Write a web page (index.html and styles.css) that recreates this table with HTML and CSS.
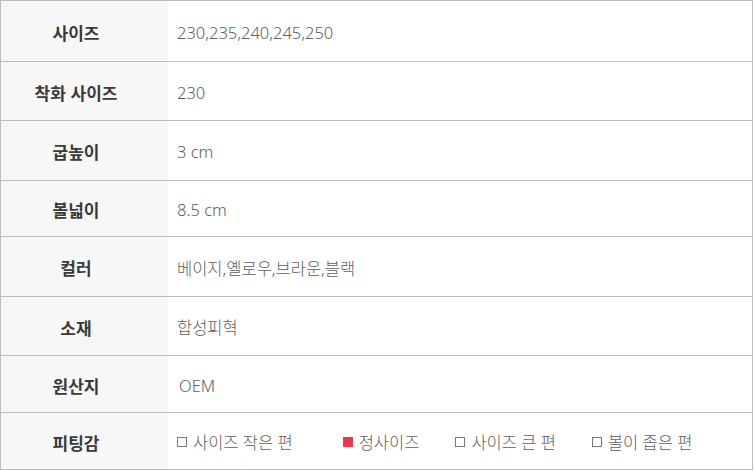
FILE: index.html
```html
<!DOCTYPE html>
<html lang="ko">
<head>
  <meta charset="UTF-8" />
  <meta name="viewport" content="width=device-width, initial-scale=1.0"/>
  <title>상품 정보</title>
  <link rel="stylesheet" href="styles.css">
</head>
<body>
  <table class="spec">
    <tr>
      <th>사이즈</th>
      <td>230,235,240,245,250</td>
    </tr>
    <tr>
      <th>착화 사이즈</th>
      <td>230</td>
    </tr>
    <tr>
      <th>굽높이</th>
      <td>3 cm</td>
    </tr>
    <tr>
      <th>볼넓이</th>
      <td>8.5 cm</td>
    </tr>
    <tr>
      <th>컬러</th>
      <td>베이지,옐로우,브라운,블랙</td>
    </tr>
    <tr>
      <th>소재</th>
      <td>합성피혁</td>
    </tr>
    <tr>
      <th>원산지</th>
      <td class="indent">OEM</td>
    </tr>
    <tr>
      <th>피팅감</th>
      <td>
        <div class="fit">
          <span class="opt first"><i class="box"></i>사이즈 작은 편</span>
          <span class="opt on"><i class="box"></i>정사이즈</span>
          <span class="opt"><i class="box"></i>사이즈 큰 편</span>
          <span class="opt"><i class="box"></i>볼이 좁은 편</span>
        </div>
      </td>
    </tr>
  </table>
</body>
</html>
```

FILE: styles.css
```css
body {
  margin: 0;
  background-color: #fff;
  font-family: "Noto Sans CJK KR", "Noto Sans", sans-serif;
}

.spec {
  width: 753px;
  border-collapse: collapse;
  border: 1px solid #bcbcbc;
}

.spec th,
.spec td {
  height: 57px;
  padding: 2px 0 0;
  border-bottom: 1px solid #bcbcbc;
  vertical-align: middle;
}

/* row heights follow the original image */
.spec tr:nth-child(1) > * { height: 58px; }
.spec tr:nth-child(2) > * { height: 56px; }
.spec tr:nth-child(3) > * { height: 57px; }
.spec tr:nth-child(4) > * { height: 53px; }
.spec tr:nth-child(5) > * { height: 57px; }
.spec tr:nth-child(6) > * { height: 56px; }
.spec tr:nth-child(7) > * { height: 54px; }
.spec tr:nth-child(8) > * { height: 54px; }

.spec th {
  width: 150px;
  padding-right: 17px;
  background-color: #f7f7f7;
  color: #3a3a3a;
  font-size: 17px;
  font-weight: 700;
  text-align: center;
}

.spec td {
  padding-left: 9px;
  color: #5e5e5e;
  font-family: "Noto Sans", "Noto Sans CJK KR", sans-serif;
  font-size: 16.5px;
  font-weight: 300;
  text-align: left;
}

.spec td.indent {
  padding-left: 11px;
}

.fit {
  display: flex;
  align-items: center;
}

.opt {
  display: inline-flex;
  align-items: center;
  margin-right: 36px;
}

.opt.first {
  margin-right: 50px;
}

.box {
  width: 8px;
  height: 8px;
  border: 1px solid #777;
  margin-right: 6px;
}

.opt.on .box {
  background-color: #e8374f;
  border-color: #e8374f;
}
```
